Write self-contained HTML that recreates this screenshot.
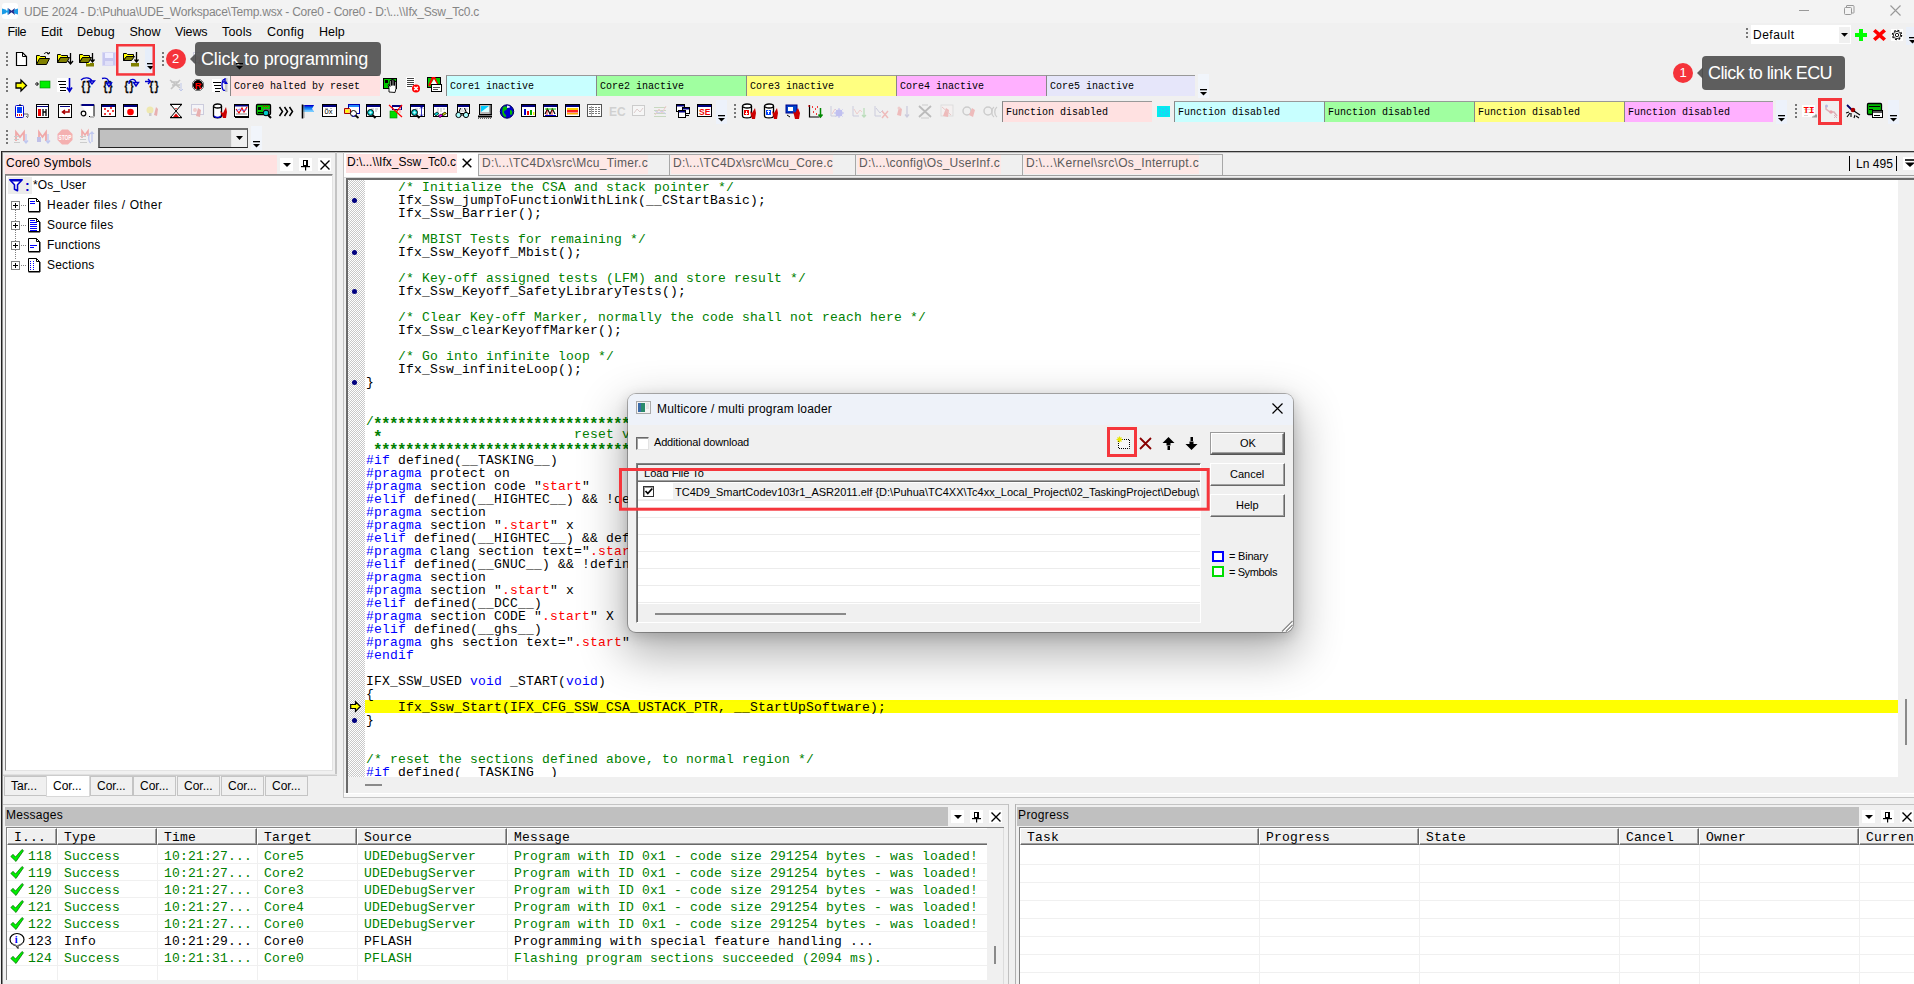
<!DOCTYPE html>
<html lang="en"><head><meta charset="utf-8"><title>UDE 2024</title><style>
html,body{margin:0;padding:0}
body{width:1914px;height:984px;overflow:hidden;background:#f0f0f0;position:relative;font-family:"Liberation Sans",sans-serif;font-size:12px;color:#000}
div,svg{position:absolute}
svg{overflow:visible}
.ui{font-family:"Liberation Sans",sans-serif;font-size:12px;line-height:16px;white-space:pre}
.mono{font-family:"Liberation Mono",monospace;font-size:13px;letter-spacing:.2px;line-height:13px;white-space:pre}
.sm{font-family:"Liberation Mono",monospace;font-size:11px;line-height:14px;white-space:pre;transform-origin:0 0;transform:scaleX(.909)}
.st{position:relative;top:4px;left:-1px;font-size:16px;letter-spacing:-1.6px;line-height:0;font-weight:bold}
.c{color:#008000}.k{color:#00f}.s{color:#f00}
</style></head><body>
<div style="left:0px;top:0px;width:1914px;height:23px;background:#f3f3f3;"></div>
<div style="left:2px;top:3px;width:16px;height:16px;background:#fff;border-radius:3px;"></div>
<svg style="left:2px;top:7px" width="16" height="9" viewBox="0 0 16 9"><path d="M0 1.500l4 1.200v3.600l-4 1.200z" fill="#1a9be6"/><path d="M16 1.500l-4 1.200v3.600l4 1.200z" fill="#1a9be6"/><path d="M3.500 3.500h2v-2.500l3 3.500-3 3.500v-2.500h-2z" fill="#1a9be6"/><path d="M6 1l4.500 3.500-4.500 3.500 1.500-3.500z" fill="#232d8c"/><path d="M13 1l-4.500 3.500 4.500 3.500-1.200-3.500z" fill="#232d8c"/></svg>
<div class="ui" style="left:24px;top:4px;letter-spacing:-0.231px;color:#858585;">UDE 2024 - D:\Puhua\UDE_Workspace\Temp.wsx - Core0 - Core0 - D:\...\\Ifx_Ssw_Tc0.c</div>
<svg style="left:1799px;top:10px" width="11" height="1" viewBox="0 0 11 1"><path d="M0 .5h10" stroke="#999"/></svg>
<svg style="left:1844px;top:5px" width="11" height="11" viewBox="0 0 11 11"><rect x=".5" y="2.500" width="7" height="7" rx="1" fill="none" stroke="#999"/><path d="M2.500 2.500v-1.500a.5 .5 0 0 1 .5-.5h6a1 1 0 0 1 1 1v6a.5 .5 0 0 1-.5.5h-1.500" fill="none" stroke="#999"/></svg>
<svg style="left:1890px;top:5px" width="11" height="11" viewBox="0 0 11 11"><path d="M.5 .5l10 10m0-10l-10 10" stroke="#999" stroke-width="1.100"/></svg>
<div class="ui" style="left:7.5px;top:24px;letter-spacing:-0.361px;font-size:12.5px;">File</div>
<div class="ui" style="left:41px;top:24px;letter-spacing:-0.060px;font-size:12.5px;">Edit</div>
<div class="ui" style="left:77px;top:24px;letter-spacing:0.213px;font-size:12.5px;">Debug</div>
<div class="ui" style="left:129.5px;top:24px;letter-spacing:-0.092px;font-size:12.5px;">Show</div>
<div class="ui" style="left:175px;top:24px;letter-spacing:-0.144px;font-size:12.5px;">Views</div>
<div class="ui" style="left:222px;top:24px;letter-spacing:0.164px;font-size:12.5px;">Tools</div>
<div class="ui" style="left:267px;top:24px;letter-spacing:0.178px;font-size:12.5px;">Config</div>
<div class="ui" style="left:319px;top:24px;letter-spacing:-0.002px;font-size:12.5px;">Help</div>
<div style="left:1746px;top:28px;width:2px;height:11px;background:repeating-linear-gradient(#777 0 2px,transparent 2px 4px);"></div>
<div style="left:1751px;top:25px;width:100px;height:19px;background:#fff;"></div>
<div style="left:1839px;top:27px;width:11px;height:16px;background:#f0f0f0;"></div>
<div class="ui" style="left:1753px;top:27px;letter-spacing:0.497px;">Default</div>
<svg style="left:1841px;top:33px" width="7" height="4" viewBox="0 0 7 4"><path d="M0 0h7l-3.500 3.800z" fill="#000"/></svg>
<svg style="left:1855px;top:29px" width="12" height="12" viewBox="0 0 12 12"><path d="M4 0h4v4h4v4h-4v4h-4v-4h-4v-4h4z" fill="#0f0"/></svg>
<svg style="left:1873px;top:29px" width="13" height="12" viewBox="0 0 13 12"><path d="M0 2.500l2.500-2.500 4 3.500 4-3.500 2.500 2.500-4 3.500 4 3.500-2.500 2.500-4-3.500-4 3.500-2.500-2.500 4-3.500z" fill="#f00"/></svg>
<div style="left:1891px;top:29px;width:12px;height:12px;background:#fff;"></div>
<svg style="left:1891px;top:29px" width="12" height="12" viewBox="0 0 12 12"><circle cx="6" cy="6" r="4.600" fill="none" stroke="#000" stroke-width="1.300" stroke-dasharray="1.800 1.810"/><circle cx="6" cy="6" r="3.700" fill="#fff" stroke="#000" stroke-width=".8"/><circle cx="6" cy="6" r="1.700" fill="none" stroke="#000" stroke-width=".9"/></svg>
<div style="left:1906px;top:27px;width:8px;height:18px;background:#eaf0fa;"></div>
<svg style="left:1909px;top:37px" width="7" height="7" viewBox="0 0 7 7"><rect x="0" y="0" width="7" height="1.300" fill="#000"/><path d="M0 3h7l-3.500 3.500z" fill="#000"/></svg>
<div style="left:6px;top:52px;width:2px;height:14px;background:repeating-linear-gradient(#777 0 2px,transparent 2px 4px);"></div>
<svg style="left:13px;top:51px" width="16" height="16" viewBox="0 0 16 16"><path d="M3.5 1.500h6l4 4v9h-10z" fill="#fff" stroke="#000" stroke-width="1.200"/><path d="M9.500 1.500v4h4" fill="none" stroke="#000"/></svg>
<svg style="left:35px;top:51px" width="16" height="16" viewBox="0 0 16 16"><path d="M1.5 13.5v-9h3l1 1h5v2" fill="#ff0" stroke="#000"/><path d="M1.5 13.5l3-6h10l-3 6z" fill="#808000" stroke="#000"/><path d="M9 3c1.5-2 4-2 5 0m0 0l.5-2m-.5 2l-2-.5" fill="none" stroke="#000"/></svg>
<svg style="left:57px;top:51px" width="16" height="16" viewBox="0 0 16 16"><path d="M.5 3.5h3l1 1h6v2h-7l-3 5z" fill="#ff0" stroke="#000"/><path d="M.5 11.5l3-5h9l-3 5z" fill="#808000" stroke="#000"/><path d="M13.5 2v11m-2.5-3l2.5 3 2.5-3" fill="none" stroke="#000" stroke-width="1.3"/></svg>
<svg style="left:79px;top:51px" width="16" height="16" viewBox="0 0 16 16"><path d="M.5 3.5h3l1 1h6v2h-7l-3 5z" fill="#ff0" stroke="#000"/><path d="M.5 11.5l3-5h9l-3 5z" fill="#808000" stroke="#000"/><path d="M13.5 2v9m-2-2.5l2 2.5 2-2.5" fill="none" stroke="#000" stroke-width="1.3"/><rect x="7" y="12" width="8" height="3.5" fill="#808000"/><rect x="8" y="12" width="3" height="1" fill="#ff0"/></svg>
<svg style="left:101px;top:51px" width="16" height="16" viewBox="0 0 16 16"><path d="M1.5 1.5h13v13h-13z" fill="#c8c8f0" stroke="#d8d8f4"/><rect x="4" y="2" width="8" height="5" fill="#eef"/><rect x="4" y="10" width="8" height="4" fill="#e0e0f8"/></svg>
<svg style="left:123px;top:51px" width="16" height="16" viewBox="0 0 16 16"><path d="M.5 2.5h3l1 1h6v2h-7l-3 4z" fill="#ff0" stroke="#000"/><path d="M.5 9.5l3-4h8l-3 4z" fill="#808000" stroke="#000"/><path d="M13.5 1v10m-2-2.5l2 2.5 2-2.5" fill="none" stroke="#000" stroke-width="1.3"/><rect x="8" y="12" width="8" height="3.5" fill="#808000"/></svg>
<div style="left:145px;top:48px;width:11px;height:24px;background:#e6eefa;"></div>
<svg style="left:147px;top:63px" width="7" height="7" viewBox="0 0 7 7"><rect x="0" y="0" width="7" height="1.300" fill="#000"/><path d="M0 3h7l-3.500 3.500z" fill="#000"/></svg>
<div style="left:162px;top:52px;width:2px;height:14px;background:repeating-linear-gradient(#777 0 2px,transparent 2px 4px);"></div>
<svg style="left:170px;top:51px" width="16" height="16" viewBox="0 0 16 16"><rect x="1.500" y="2.500" width="12" height="10" fill="#f6f6f6" stroke="#ccc"/><path d="M3 10l3-4 3 3 3-4" stroke="#dcc" fill="none"/></svg>
<svg style="left:192px;top:51px" width="16" height="16" viewBox="0 0 16 16"><rect x="1.500" y="1.500" width="12" height="10" fill="#f4f4f8" stroke="#ccd"/><path d="M6 13l2-8 3 2-1 7z" fill="#e8b0b0"/><circle cx="5" cy="7" r="2" fill="#ecc"/></svg>
<svg style="left:214px;top:51px" width="16" height="16" viewBox="0 0 16 16"><rect x="1.500" y="2.500" width="12" height="10" fill="#f6f6f6" stroke="#ccc"/><path d="M3 10l3-4 3 3 3-4" stroke="#dcc" fill="none"/></svg>
<div style="left:6px;top:78px;width:2px;height:14px;background:repeating-linear-gradient(#777 0 2px,transparent 2px 4px);"></div>
<svg style="left:13px;top:77px" width="16" height="16" viewBox="0 0 16 16"><path d="M3 6h5v-3l5.500 5.500-5.500 5.500v-3h-5z" fill="#ff0" stroke="#000" stroke-width="1.300"/></svg>
<svg style="left:35px;top:77px" width="16" height="16" viewBox="0 0 16 16"><rect x="5" y="4" width="10" height="7" fill="#0e0" stroke="#008000" stroke-width=".6"/><path d="M0 7h3m-1.5-2l2 2-2 2" fill="none" stroke="#000"/></svg>
<svg style="left:57px;top:77px" width="16" height="16" viewBox="0 0 16 16"><rect x="0" y="1" width="12" height="14" fill="#fff"/><path d="M1 4.5h8M2 7.5h7M3 10.5h6M3 13.5h6" stroke="#000"/><path d="M12.5 1v13m-2.5-3.5l2.5 4 2.5-4" fill="none" stroke="#00c" stroke-width="1.6"/></svg>
<svg style="left:79px;top:77px" width="16" height="16" viewBox="0 0 16 16"><text x="2" y="13" font-family="Liberation Mono,monospace" font-weight="bold" font-size="12.500" textLength="10" lengthAdjust="spacingAndGlyphs" fill="#000" stroke="#000" stroke-width=".45">{}</text><path d="M2 3c3-3 9-3 11 1m0 3l-2.500-3h5z" fill="none" stroke="#00c" stroke-width="1.4"/></svg>
<svg style="left:101px;top:77px" width="16" height="16" viewBox="0 0 16 16"><text x="2" y="13" font-family="Liberation Mono,monospace" font-weight="bold" font-size="12.500" textLength="10" lengthAdjust="spacingAndGlyphs" fill="#000" stroke="#000" stroke-width=".45">{}</text><path d="M1 1.500c4-1 7 0 7 5m0 3l-2.500-3.500h5z" fill="none" stroke="#00c" stroke-width="1.400"/></svg>
<svg style="left:123px;top:77px" width="16" height="16" viewBox="0 0 16 16"><text x="1" y="13" font-family="Liberation Mono,monospace" font-weight="bold" font-size="12.500" textLength="10" lengthAdjust="spacingAndGlyphs" fill="#000" stroke="#000" stroke-width=".45">{}</text><path d="M6 7c0-6 7-6 7-1m0 3l-2.500-3.500h5z" fill="none" stroke="#00c" stroke-width="1.400"/></svg>
<svg style="left:145px;top:77px" width="16" height="16" viewBox="0 0 16 16"><text x="4" y="13" font-family="Liberation Mono,monospace" font-weight="bold" font-size="12.500" textLength="10" lengthAdjust="spacingAndGlyphs" fill="#000" stroke="#000" stroke-width=".45">{}</text><path d="M0 4.500h5m-2-2.500l2.500 2.500-2.500 2.500" fill="none" stroke="#00c" stroke-width="1.400"/></svg>
<svg style="left:168px;top:77px" width="16" height="16" viewBox="0 0 16 16"><path d="M2 3l10 8M12 3l-9 9M3 5h8M4 8h8" stroke="#c4c4c4" stroke-width="1.600"/><path d="M13 6v8m-2-2l2 2 2-2" stroke="#c0c8e8" fill="none"/></svg>
<svg style="left:190px;top:77px" width="16" height="16" viewBox="0 0 16 16"><path d="M5.500 2.500h5l3 3v5l-3 3h-5l-3-3v-5z" fill="#fff" stroke="#777"/><circle cx="8" cy="8" r="5" fill="#000"/><text x="4.700" y="11.500" font-family="Liberation Sans,sans-serif" font-weight="bold" font-size="9.500" fill="#f00">R</text></svg>
<svg style="left:212px;top:77px" width="16" height="16" viewBox="0 0 16 16"><rect x="0" y="2" width="9" height="13" fill="#fff"/><path d="M1 5.500h8M2 8.500h7M3 11.500h6M3 14.500h5" stroke="#000"/><rect x="13" y="1" width="2.500" height="14" fill="#c8c8c8"/><path d="M13 3c-4-3-4 13 0 10m0-12v4h-3" fill="none" stroke="#00c" stroke-width="1.300"/><path d="M14 4l2 3h-4z" fill="#00c"/></svg>
<div style="left:230px;top:75px;width:150px;height:21px;background:#ffe1e1;border-left:1px solid #888;border-top:1px solid #999;box-sizing:border-box;"></div>
<div class="sm" style="left:234px;top:79px">Core0 halted by reset</div>
<svg style="left:383px;top:77px" width="16" height="16" viewBox="0 0 16 16"><rect x=".5" y="1.500" width="13" height="10" fill="#0c0" stroke="#000"/><rect x="2" y="3" width="3" height="3" fill="#000"/><path d="M6 15v-4l-1-3 1-.5 1 2v-6h1.500v5-6h1.500v6-5.500h1.500v5.500-4h1.500v7l-1 4z" fill="#fff" stroke="#000" stroke-width=".9"/></svg>
<svg style="left:405px;top:77px" width="16" height="16" viewBox="0 0 16 16"><rect x="1" y="0" width="9" height="12" fill="#fff"/><path d="M2 1.500h7M2 3.500h7M2 5.500h7M2 7.500h7M2 9.500h5" stroke="#444"/><circle cx="11" cy="11.500" r="4" fill="#f00"/><path d="M9.200 9.700l3.600 3.600m0-3.600l-3.600 3.600" stroke="#fff" stroke-width="1.500"/></svg>
<svg style="left:427px;top:77px" width="16" height="16" viewBox="0 0 16 16"><rect x=".5" y=".5" width="13" height="10" fill="#0c0" stroke="#000"/><path d="M2 9l3.500-8h2l3.500 8" fill="none" stroke="#f00" stroke-width="2"/><path d="M4 7l3-5 3 5z" fill="#fff"/><rect x="4.500" y="7.500" width="10" height="7" fill="#fff" stroke="#000"/><path d="M6 10.500h7M6 12.500h5" stroke="#555"/></svg>
<div style="left:446px;top:75px;width:150px;height:21px;background:#c8ffff;border-left:1px solid #888;border-top:1px solid #999;box-sizing:border-box;"></div>
<div class="sm" style="left:450px;top:79px">Core1 inactive</div>
<div style="left:596px;top:75px;width:150px;height:21px;background:#a0ffa0;border-left:1px solid #888;border-top:1px solid #999;box-sizing:border-box;"></div>
<div class="sm" style="left:600px;top:79px">Core2 inactive</div>
<div style="left:746px;top:75px;width:150px;height:21px;background:#ffff80;border-left:1px solid #888;border-top:1px solid #999;box-sizing:border-box;"></div>
<div class="sm" style="left:750px;top:79px">Core3 inactive</div>
<div style="left:896px;top:75px;width:150px;height:21px;background:#ffb0ff;border-left:1px solid #888;border-top:1px solid #999;box-sizing:border-box;"></div>
<div class="sm" style="left:900px;top:79px">Core4 inactive</div>
<div style="left:1046px;top:75px;width:149px;height:21px;background:#e6e6fa;border-left:1px solid #888;border-top:1px solid #999;box-sizing:border-box;"></div>
<div class="sm" style="left:1050px;top:79px">Core5 inactive</div>
<div style="left:1198px;top:74px;width:11px;height:24px;background:#f1f5fb;"></div>
<svg style="left:1200px;top:89px" width="7" height="7" viewBox="0 0 7 7"><rect x="0" y="0" width="7" height="1.300" fill="#000"/><path d="M0 3h7l-3.500 3.500z" fill="#000"/></svg>
<div style="left:6px;top:104px;width:2px;height:14px;background:repeating-linear-gradient(#777 0 2px,transparent 2px 4px);"></div>
<svg style="left:13px;top:103px" width="16" height="16" viewBox="0 0 16 16"><rect x="2.500" y="2.500" width="8" height="12" rx="1" fill="#fff" stroke="#00c"/><rect x="4" y="4" width="5" height="6" fill="#04f"/><path d="M4 12h1m1 0h1m1 0h1" stroke="#e00" stroke-width="2"/><path d="M7 1v2" stroke="#000"/><path d="M11 11h4v3m-2-1l2 2" stroke="#666" fill="none"/></svg>
<svg style="left:35px;top:103px" width="16" height="16" viewBox="0 0 16 16"><rect x="1.500" y="1.500" width="12" height="13" fill="#fff" stroke="#000"/><path d="M2 3.500h11" stroke="#000080"/><rect x="3" y="6" width="3" height="7" fill="#e00"/><path d="M8 6v7M11 6v7M8 9h3" stroke="#000" stroke-width="1.300"/></svg>
<svg style="left:57px;top:103px" width="16" height="16" viewBox="0 0 16 16"><rect x="1.500" y="1.500" width="13" height="13" fill="#fff" stroke="#000"/><path d="M3 3.500h10" stroke="#000080"/><path d="M12 6v3h-6m2-2l-2.500 2 2.500 2" fill="none" stroke="#a00" stroke-width="1.500"/></svg>
<svg style="left:79px;top:103px" width="16" height="16" viewBox="0 0 16 16"><path d="M2 1.500h13v12h-5" fill="#fff" stroke="#000"/><rect x="2" y="1" width="13" height="2" fill="#000080"/><circle cx="4.500" cy="10.500" r="2.300" fill="#fff" stroke="#000" stroke-width="1.200"/><path d="M1 2h2" stroke="#aaa"/><rect x="11" y="13" width="4" height="2" fill="#bbb"/></svg>
<svg style="left:101px;top:103px" width="16" height="16" viewBox="0 0 16 16"><rect x=".5" y="1.5" width="14" height="12" fill="#fff" stroke="#000"/><rect x="1" y="2" width="13" height="2" fill="#000080"/><path d="M3 6h2M9 5h2M6 8h2M11 8h2M3 11h2M8 11h2" stroke="#e00" stroke-width="1.500"/></svg>
<svg style="left:123px;top:103px" width="16" height="16" viewBox="0 0 16 16"><rect x=".5" y="1.5" width="14" height="12" fill="#fff" stroke="#000"/><rect x="1" y="2" width="13" height="2" fill="#000080"/><circle cx="7.500" cy="9" r="3.300" fill="#f00"/></svg>
<svg style="left:145px;top:103px" width="16" height="16" viewBox="0 0 16 16"><circle cx="5" cy="7" r="3.500" fill="#eee8b0"/><rect x="4" y="10" width="2.500" height="3" fill="#ccc"/><path d="M9 12l2-8 2 2-1 7z" fill="#e8b0b0"/></svg>
<svg style="left:168px;top:103px" width="16" height="16" viewBox="0 0 16 16"><path d="M2 1.500h12M2 14.500h12" stroke="#000" stroke-width="1.300"/><path d="M3 2l5 6 5-6M3 14l5-6 5 6" fill="#fff" stroke="#000"/><path d="M5 14l3-3.500 3 3.500z" fill="#d00"/><path d="M7 5h2l-1 1.500z" fill="#d00"/></svg>
<svg style="left:190px;top:103px" width="16" height="16" viewBox="0 0 16 16"><rect x="1.500" y="1.500" width="12" height="10" fill="#f4f4f8" stroke="#ccd"/><path d="M6 13l2-8 3 2-1 7z" fill="#e8b0b0"/><circle cx="5" cy="7" r="2" fill="#ecc"/></svg>
<svg style="left:212px;top:103px" width="16" height="16" viewBox="0 0 16 16"><path d="M1.500 3v10c0 2.500 8 2.500 8 0v-10" fill="#fff" stroke="#000" stroke-width="1.300"/><ellipse cx="5.500" cy="3" rx="4" ry="2" fill="#fff" stroke="#000" stroke-width="1.300"/><path d="M2 13c2 2 5 2 7 0" stroke="#00c" fill="none" stroke-width="1.500"/><path d="M8 8l3 2 3-6 1 5-1 6-3 0z" fill="#c00"/></svg>
<svg style="left:234px;top:103px" width="16" height="16" viewBox="0 0 16 16"><rect x=".5" y="1.500" width="14" height="12" fill="#fff" stroke="#000"/><rect x="1" y="2" width="13" height="1.500" fill="#000080"/><path d="M2 11h11" stroke="#888"/><path d="M2 6l3 4 3-5 2 4 3-5" fill="none" stroke="#e00" stroke-width="1.200"/><path d="M2 8l4-2 3 2 4-2" fill="none" stroke="#66f" stroke-width=".8"/><path d="M1 14.500h14" stroke="#000"/></svg>
<svg style="left:256px;top:103px" width="16" height="16" viewBox="0 0 16 16"><rect x=".5" y="1.500" width="14" height="10" rx="1" fill="#0c0" stroke="#000" stroke-width="1.300"/><rect x="2" y="4" width="3" height="3" fill="#000"/><path d="M7 3.500h6" stroke="#e00" stroke-dasharray="1 1"/><path d="M2 9.500h5" stroke="#000"/><rect x="7" y="6" width="7" height="5" fill="#666"/><circle cx="10" cy="10" r="2.800" fill="#0cc" stroke="#000"/><path d="M12 12l3 3" stroke="#000" stroke-width="2"/></svg>
<svg style="left:278px;top:103px" width="16" height="16" viewBox="0 0 16 16"><path d="M1.500 4l3 4.500-3 4.500M6.500 4l3 4.500-3 4.500M11.500 4l3 4.500-3 4.500" fill="none" stroke="#000" stroke-width="1.500"/></svg>
<svg style="left:300px;top:103px" width="16" height="16" viewBox="0 0 16 16"><path d="M3 2h11l-2 3.500 2 3.500h-11z" fill="#39f"/><path d="M3 2h11l-1 1.800h-10z" fill="#00c"/><path d="M3 3.800h10l-1 1.700h-9z" fill="#06e"/><path d="M3 7.200h10l1 1.800h-11z" fill="#7cf"/><path d="M2.500 1.500v14" stroke="#000" stroke-width="1.600"/><path d="M4 2v13" stroke="#888" stroke-width=".8"/></svg>
<svg style="left:322px;top:103px" width="16" height="16" viewBox="0 0 16 16"><rect x=".5" y="1.5" width="14" height="12" fill="#fff" stroke="#000"/><rect x="1" y="2" width="13" height="2" fill="#000080"/><text x="2.500" y="11" font-family="Liberation Sans,sans-serif" font-size="7.500" fill="#000">0x</text><path d="M3 5.500h3M8 5.500h2" stroke="#888" stroke-width=".6"/></svg>
<svg style="left:344px;top:103px" width="16" height="16" viewBox="0 0 16 16"><rect x="4.500" y="1.500" width="11" height="9" fill="#fff" stroke="#00a"/><rect x="5" y="2" width="10" height="2" fill="#28f"/><path d="M.5 5.500h5l1 1v4h-6z" fill="#fc6" stroke="#a00"/><rect x="1.500" y="7" width="3" height="2.500" fill="#ff0"/><circle cx="9.500" cy="10.500" r="3" fill="#fff" stroke="#000"/><path d="M11.500 12.500l3 2.500" stroke="#000" stroke-width="1.800"/><path d="M8 12.500c1 1 2 1 3 0" stroke="#00c" fill="none"/></svg>
<svg style="left:366px;top:103px" width="16" height="16" viewBox="0 0 16 16"><rect x=".5" y="1.5" width="14" height="12" fill="#fff" stroke="#000"/><rect x="1" y="2" width="13" height="2" fill="#000080"/><path d="M5 6h3M9 6h3M9 8h2" stroke="#999" stroke-width=".7"/><circle cx="4.5" cy="9.5" r="3" fill="#0cc" stroke="#000"/><circle cx="4.5" cy="9.5" r="1.2" fill="#cff"/><path d="M6.5 12l3 3" stroke="#000" stroke-width="2"/></svg>
<svg style="left:388px;top:103px" width="16" height="16" viewBox="0 0 16 16"><rect x="4.500" y="2.500" width="9" height="4" fill="#fff" stroke="#000080"/><rect x="5" y="2" width="9" height="2" fill="#000080"/><rect x="2" y="8" width="7" height="7" fill="#0d0" stroke="#080" stroke-width=".6"/><path d="M1 2l13 12M14 2l-5 6" stroke="#f00" stroke-width="1.200"/><path d="M12 5v5" stroke="#f99"/></svg>
<svg style="left:410px;top:103px" width="16" height="16" viewBox="0 0 16 16"><rect x=".5" y="1.5" width="14" height="12" fill="#fff" stroke="#000"/><rect x="1" y="2" width="13" height="2" fill="#000080"/><path d="M5 6h3M5 8h2" stroke="#999" stroke-width=".7"/><path d="M11.500 4v9m-1.500-7.500l1.500-1.500 1.500 1.500m-3 6l1.500 1.500 1.500-1.500" stroke="#00a" fill="none" stroke-width=".8"/><circle cx="4.5" cy="9.5" r="3" fill="#0cc" stroke="#000"/><circle cx="4.5" cy="9.5" r="1.2" fill="#cff"/><path d="M6.5 12l3 3" stroke="#000" stroke-width="2"/></svg>
<svg style="left:433px;top:103px" width="16" height="16" viewBox="0 0 16 16"><rect x=".5" y="1.5" width="14" height="12" fill="#fff" stroke="#000"/><rect x="1" y="2" width="13" height="2" fill="#000080"/><path d="M4 6h2M7 6h2M10 6h2M4 8h2M7 8h2" stroke="#999" stroke-width=".7"/><path d="M1 11l3-2 2 1.500-3 2.500z" fill="#0cc" stroke="#000" stroke-width=".7"/><path d="M5 13l2 1.500 3-2-2-1.500z" fill="#e0e" stroke="#000" stroke-width=".7"/><path d="M9 11l3-2 1.500 1.500-3 2z" fill="#cc0" stroke="#000" stroke-width=".7"/></svg>
<svg style="left:455px;top:103px" width="16" height="16" viewBox="0 0 16 16"><rect x="2.500" y="1.500" width="12" height="9" fill="#fff" stroke="#000"/><rect x="3" y="2" width="11" height="2" fill="#000080"/><path d="M5 6h3M9 6h4M5 8h7" stroke="#999" stroke-width=".7"/><path d="M3.500 10l2-5M11.500 10l-2-5" stroke="#000" fill="none"/><circle cx="3.500" cy="12" r="2.600" fill="#aff" stroke="#000"/><circle cx="11" cy="12" r="2.600" fill="#aff" stroke="#000"/><path d="M6 12h2.500" stroke="#000"/></svg>
<svg style="left:477px;top:103px" width="16" height="16" viewBox="0 0 16 16"><rect x="2.500" y="1.500" width="12" height="10" fill="#bbb" stroke="#000"/><rect x="4" y="3" width="8" height="6" fill="#0cf"/><path d="M4 9l8-6v6z" fill="#dff"/><path d="M13.500 2v9" stroke="#666" stroke-width="1.500"/><path d="M1 13.500h14" stroke="#000" stroke-width="2"/><path d="M1 15.500h13" stroke="#666" stroke-dasharray="1 1"/></svg>
<svg style="left:499px;top:103px" width="16" height="16" viewBox="0 0 16 16"><circle cx="8" cy="8.500" r="6.700" fill="#00c" stroke="#005"/><path d="M4 4c3-2 5 0 4 2s-3 1-3 3 3 3 2 5c-3 0-5-4-3-10z" fill="#0b0"/><path d="M11 7c2 0 3 2 2 4s-2 1-2-1z" fill="#0b0"/><path d="M8 2.500c2 0 3 1 3 2l-3 .5z" fill="#eef"/></svg>
<svg style="left:521px;top:103px" width="16" height="16" viewBox="0 0 16 16"><rect x=".5" y="1.5" width="14" height="12" fill="#fff" stroke="#000"/><rect x="1" y="2" width="13" height="2" fill="#000080"/><rect x="3" y="6" width="2" height="6" fill="#00c"/><rect x="6" y="8" width="2" height="4" fill="#e00"/><rect x="9" y="7" width="2" height="5" fill="#0a0"/><rect x="12" y="9" width="1.500" height="3" fill="#ee0"/></svg>
<svg style="left:543px;top:103px" width="16" height="16" viewBox="0 0 16 16"><rect x=".5" y="1.5" width="14" height="12" fill="#fff" stroke="#000"/><rect x="1" y="2" width="13" height="2" fill="#000080"/><path d="M2 11l2.500-5 2.500 5 2.500-5 2.500 5" fill="none" stroke="#000" stroke-width="1.200"/><path d="M4 5v8M9 5v8" stroke="#e00" stroke-width=".8"/><rect x="2" y="5" width="11" height="2" fill="#0c0" opacity=".5"/><path d="M2 12.500h11" stroke="#00c"/></svg>
<svg style="left:565px;top:103px" width="16" height="16" viewBox="0 0 16 16"><rect x=".5" y="1.5" width="14" height="12" fill="#fff" stroke="#000"/><rect x="1" y="2" width="13" height="2" fill="#000080"/><rect x="2" y="5" width="11" height="2" fill="#ffd000"/><rect x="2" y="7" width="11" height="2.500" fill="#f22"/><rect x="2" y="10" width="11" height="1.500" fill="#fa0"/></svg>
<svg style="left:587px;top:103px" width="16" height="16" viewBox="0 0 16 16"><rect x=".5" y="1.500" width="14" height="12" fill="#fff" stroke="#555"/><path d="M2 4.500h11M2 6.500h11M2 8.500h11M2 10.500h11" stroke="#777" stroke-dasharray="2 1"/><path d="M4.500 3v10" stroke="#aaa"/></svg>
<svg style="left:609px;top:103px" width="16" height="16" viewBox="0 0 16 16"><text x="0" y="13" font-family="Liberation Sans,sans-serif" font-weight="bold" font-size="12" fill="#d0d0d0">EC</text></svg>
<svg style="left:631px;top:103px" width="16" height="16" viewBox="0 0 16 16"><rect x="1.500" y="2.500" width="12" height="10" fill="#f6f6f6" stroke="#ccc"/><path d="M3 10l3-4 3 3 3-4" stroke="#dcc" fill="none"/></svg>
<svg style="left:653px;top:103px" width="16" height="16" viewBox="0 0 16 16"><path d="M1 4.500h12M1 7.500h12M1 10.500h12M1 13.500h12" stroke="#c8d8c0"/><path d="M2 12l4-6 3 4 4-7" stroke="#ecc" fill="none"/><path d="M2 8l4 2 3-2 4 3" stroke="#cce" fill="none"/></svg>
<svg style="left:675px;top:103px" width="16" height="16" viewBox="0 0 16 16"><rect x="1.500" y="1.500" width="8" height="7" fill="#fff" stroke="#000"/><rect x="2" y="2" width="7" height="1.500" fill="#000080"/><rect x="7.500" y="4.500" width="7" height="6" fill="#fff" stroke="#000"/><rect x="8" y="5" width="6" height="1.500" fill="#000080"/><rect x="3.500" y="7.500" width="7" height="7" fill="#fff" stroke="#000"/><rect x="4" y="8" width="6" height="1.500" fill="#000080"/><path d="M11 12.500h3" stroke="#000"/></svg>
<svg style="left:697px;top:103px" width="16" height="16" viewBox="0 0 16 16"><rect x=".5" y="1.5" width="14" height="12" fill="#fff" stroke="#000"/><rect x="1" y="2" width="13" height="2" fill="#000080"/><text x="2" y="12" font-family="Liberation Sans,sans-serif" font-weight="bold" font-size="8.500" fill="#e00">SE</text></svg>
<div style="left:716px;top:100px;width:11px;height:24px;background:#edf2fb;"></div>
<svg style="left:718px;top:115px" width="7" height="7" viewBox="0 0 7 7"><rect x="0" y="0" width="7" height="1.300" fill="#000"/><path d="M0 3h7l-3.500 3.500z" fill="#000"/></svg>
<div style="left:734px;top:104px;width:2px;height:14px;background:repeating-linear-gradient(#777 0 2px,transparent 2px 4px);"></div>
<svg style="left:741px;top:103px" width="16" height="16" viewBox="0 0 16 16"><path d="M1.500 3v10c0 2.500 9 2.500 9 0v-10" fill="#fff" stroke="#000" stroke-width="1.300"/><ellipse cx="6" cy="3" rx="4.500" ry="2" fill="#fff" stroke="#000" stroke-width="1.300"/><rect x="3" y="7" width="5" height="5" fill="#e00"/><path d="M5.500 8v3m-1.500-1l1.500 1.500 1.500-1.500" stroke="#fff" fill="none"/><path d="M9 8l2 2 3-5 1 5-1 6h-3z" fill="#c00"/></svg>
<svg style="left:763px;top:103px" width="16" height="16" viewBox="0 0 16 16"><path d="M1.500 3v10c0 2.500 9 2.500 9 0v-10" fill="#fff" stroke="#000" stroke-width="1.300"/><ellipse cx="6" cy="3" rx="4.500" ry="2" fill="#fff" stroke="#000" stroke-width="1.300"/><rect x="3" y="7" width="5" height="5" fill="#04f"/><path d="M5.500 11v-3m-1.500 1l1.500-1.500 1.500 1.500" stroke="#fff" fill="none"/><path d="M9 8l2 2 3-5 1 5-1 6h-3z" fill="#c00"/></svg>
<svg style="left:785px;top:103px" width="16" height="16" viewBox="0 0 16 16"><rect x="1" y="2" width="11" height="8" fill="#04c" stroke="#008"/><rect x="3" y="4" width="5" height="4" fill="#fff"/><path d="M8 8l2 2 3-5 2 5-1 6h-4z" fill="#c00"/><path d="M2 12l3 2" stroke="#000"/></svg>
<svg style="left:807px;top:103px" width="16" height="16" viewBox="0 0 16 16"><path d="M2.500 2v12h10" fill="none" stroke="#000" stroke-width="1.200"/><path d="M5 4h1M8 6h1M6 9h1M10 4h1M9 11h1" stroke="#e00" stroke-width="1.500"/><path d="M13.500 5v9m-2-2.500l2 2.500 2-2.500" stroke="#080" fill="none" stroke-width="1.500"/><path d="M1 3h2" stroke="#e00"/></svg>
<svg style="left:829px;top:103px" width="16" height="16" viewBox="0 0 16 16"><path d="M2 3v10h6" stroke="#ccd" fill="none"/><path d="M3 11l3-5 3 3" stroke="#ecc" fill="none"/><circle cx="10" cy="10" r="3.500" fill="#c0c0f0"/><path d="M10 5v10M5 10h10M6.500 6.500l7 7M13.500 6.500l-7 7" stroke="#c0c0f0"/></svg>
<svg style="left:851px;top:103px" width="16" height="16" viewBox="0 0 16 16"><path d="M2 3v10h6" stroke="#ccd" fill="none"/><path d="M3 6l3 5 3-4 2 2" stroke="#ecc" fill="none"/><path d="M13 5v9m-2-2l2 2 2-2" stroke="#bdb" fill="none" stroke-width="1.300"/></svg>
<svg style="left:873px;top:103px" width="16" height="16" viewBox="0 0 16 16"><path d="M2 3v10h6" stroke="#ccd" fill="none"/><path d="M3 5l4 5 3-3" stroke="#ccd" fill="none"/><path d="M9 8l6 7M15 8l-6 7" stroke="#ebb" stroke-width="1.500"/></svg>
<svg style="left:895px;top:103px" width="16" height="16" viewBox="0 0 16 16"><path d="M2 12l2-8 3 2-1 7z" fill="#ebb"/><circle cx="4" cy="5" r="1.500" fill="#ecc"/><path d="M12 3v11m-2-2.500l2 2.500 2-2.500" stroke="#ccd" fill="none" stroke-width="1.300"/></svg>
<svg style="left:917px;top:103px" width="16" height="16" viewBox="0 0 16 16"><path d="M2 3l12 11M14 3l-12 11" stroke="#bbb" stroke-width="1.800"/><path d="M5 2h6M4 15h8" stroke="#ccc"/></svg>
<svg style="left:939px;top:103px" width="16" height="16" viewBox="0 0 16 16"><rect x="2" y="2" width="12" height="11" fill="#f4f0f0" stroke="#ddd"/><path d="M4 13l3-8 3 2-1 7z" fill="#ebb"/><path d="M3 4l9 8" stroke="#e8c8c8"/></svg>
<svg style="left:961px;top:103px" width="16" height="16" viewBox="0 0 16 16"><circle cx="6" cy="8" r="4" fill="none" stroke="#ccc" stroke-width="1.500"/><path d="M8 12l3-7 3 2-2 7z" fill="#ebb"/></svg>
<svg style="left:983px;top:103px" width="16" height="16" viewBox="0 0 16 16"><circle cx="5" cy="8" r="4" fill="none" stroke="#ccc" stroke-width="1.500"/><path d="M11 4c-3 2-3 8 0 10M14 4c-3 2-3 8 0 10" fill="none" stroke="#ccc" stroke-width="1.300"/></svg>
<div style="left:1002px;top:101px;width:150px;height:21px;background:#ffe1e1;border-left:1px solid #888;border-top:1px solid #999;box-sizing:border-box;"></div>
<div class="sm" style="left:1006px;top:105px">Function disabled</div>
<svg style="left:1156px;top:103px" width="16" height="16" viewBox="0 0 16 16"><rect x="1" y="3" width="13" height="11" fill="#0ee"/><path d="M4 4v10M7 5v8M10 4v10M12 6v7" stroke="#4af" stroke-dasharray="2 1.500"/></svg>
<div style="left:1174px;top:101px;width:150px;height:21px;background:#c8ffff;border-left:1px solid #888;border-top:1px solid #999;box-sizing:border-box;"></div>
<div class="sm" style="left:1178px;top:105px">Function disabled</div>
<div style="left:1324px;top:101px;width:150px;height:21px;background:#a0ffa0;border-left:1px solid #888;border-top:1px solid #999;box-sizing:border-box;"></div>
<div class="sm" style="left:1328px;top:105px">Function disabled</div>
<div style="left:1474px;top:101px;width:150px;height:21px;background:#ffff80;border-left:1px solid #888;border-top:1px solid #999;box-sizing:border-box;"></div>
<div class="sm" style="left:1478px;top:105px">Function disabled</div>
<div style="left:1624px;top:101px;width:149px;height:21px;background:#ffb0ff;border-left:1px solid #888;border-top:1px solid #999;box-sizing:border-box;"></div>
<div class="sm" style="left:1628px;top:105px">Function disabled</div>
<div style="left:1776px;top:100px;width:11px;height:24px;background:#edf2fb;"></div>
<svg style="left:1778px;top:115px" width="7" height="7" viewBox="0 0 7 7"><rect x="0" y="0" width="7" height="1.300" fill="#000"/><path d="M0 3h7l-3.500 3.500z" fill="#000"/></svg>
<div style="left:1795px;top:104px;width:2px;height:14px;background:repeating-linear-gradient(#777 0 2px,transparent 2px 4px);"></div>
<svg style="left:1802px;top:103px" width="16" height="16" viewBox="0 0 16 16"><rect x="0" y="2" width="13" height="12" fill="#fff"/><path d="M2 6.500h10M2 9.500h9M2 12.500h4" stroke="#ccc" stroke-width=".8"/><text x="1.500" y="9.500" font-family="Liberation Mono,monospace" font-weight="bold" font-size="9.500" textLength="11" lengthAdjust="spacingAndGlyphs" fill="#f00">TI</text><path d="M9 14.500h1v-1h1.500v-1h1.500v-1h2v3z" fill="#999"/></svg>
<svg style="left:1823px;top:103px" width="16" height="16" viewBox="0 0 16 16"><path d="M3 3v3l4 3 4 0 3 4" fill="none" stroke="#ddb0b8" stroke-width="1.500"/><circle cx="3.500" cy="3" r="1.500" fill="#b8b8e0"/><circle cx="8" cy="9" r="1.700" fill="#e8a0a8"/><path d="M11 12l3 3m0-3l-3 3" stroke="#ddb0b8"/></svg>
<svg style="left:1845px;top:103px" width="16" height="16" viewBox="0 0 16 16"><path d="M2 2l5 5" stroke="#006" stroke-width="1.800"/><circle cx="8" cy="7" r="2.300" fill="#a00"/><path d="M9 8l6 4M5 10l-3 4m2-5l-3 1m5 0v4M11 13l3 2m-4-3l-1 3" stroke="#000" stroke-width="1.100"/></svg>
<svg style="left:1867px;top:103px" width="16" height="16" viewBox="0 0 16 16"><rect x=".5" y=".5" width="14" height="11" rx="1" fill="#0b0" stroke="#000" stroke-width="1.300"/><path d="M2 3.500h11M2 6.500h4" stroke="#000"/><rect x="5.500" y="7.500" width="10" height="7" fill="#fff" stroke="#000"/><rect x="6" y="8" width="9" height="2" fill="#555"/><path d="M7 12.500h6" stroke="#000"/></svg>
<div style="left:1888px;top:100px;width:11px;height:24px;background:#edf2fb;"></div>
<svg style="left:1890px;top:115px" width="7" height="7" viewBox="0 0 7 7"><rect x="0" y="0" width="7" height="1.300" fill="#000"/><path d="M0 3h7l-3.500 3.500z" fill="#000"/></svg>
<div style="left:6px;top:130px;width:2px;height:14px;background:repeating-linear-gradient(#777 0 2px,transparent 2px 4px);"></div>
<svg style="left:13px;top:129px" width="16" height="16" viewBox="0 0 16 16"><path d="M3 12v-9l4 5 4-5v9" fill="none" stroke="#f0a8a8" stroke-width="1.800"/><path d="M1 7.500h5M1 10.500h5M1 13.500h6" stroke="#ccc"/><path d="M13 5v9m-2-2.500l2 2.500 2-2.500" stroke="#c0c8f0" fill="none" stroke-width="1.300"/></svg>
<svg style="left:35px;top:129px" width="16" height="16" viewBox="0 0 16 16"><path d="M4 12v-9l3.500 5 3.500-5v9" fill="none" stroke="#f0a8a8" stroke-width="1.800"/><rect x="2" y="8" width="4" height="5" fill="#c0c0e8"/><path d="M13 5v9m-2-2.500l2 2.500 2-2.500" stroke="#c0c8f0" fill="none" stroke-width="1.300"/></svg>
<svg style="left:57px;top:129px" width="16" height="16" viewBox="0 0 16 16"><path d="M5 .5h6l4.500 4.500v6l-4.500 4.500h-6l-4.500-4.500v-6z" fill="#f4b0b0"/><text x="1.500" y="10.800" font-family="Liberation Sans,sans-serif" font-weight="bold" font-size="6.300" fill="#fff" textLength="13" lengthAdjust="spacingAndGlyphs">STOP</text></svg>
<svg style="left:79px;top:129px" width="16" height="16" viewBox="0 0 16 16"><path d="M3 9v-7l3 4 3-4v5" fill="none" stroke="#f0a8a8" stroke-width="1.600"/><path d="M1 7.500h6M1 10.500h6M1 13.500h7" stroke="#ccc"/><path d="M12 4c-3 1-3 9 0 10m1-11v10" stroke="#c0c8f0" fill="none" stroke-width="1.300"/><path d="M13 2l2.500 3h-5z" fill="#c0c8f0"/></svg>
<div style="left:98px;top:128px;width:150px;height:20px;background:#c0c0c0;border:solid;border-width:2px 1px 1px 2px;border-color:#707070 #555 #222 #707070;box-sizing:border-box;"></div>
<div style="left:231px;top:130px;width:1px;height:17px;background:#e8e8e8;"></div>
<div style="left:232px;top:130px;width:15px;height:17px;background:#f0f0f0;"></div>
<svg style="left:236px;top:136px" width="7" height="4" viewBox="0 0 7 4"><path d="M0 0h7l-3.500 4z" fill="#000"/></svg>
<div style="left:251px;top:126px;width:11px;height:24px;background:#f1f5fb;"></div>
<svg style="left:253px;top:141px" width="7" height="7" viewBox="0 0 7 7"><rect x="0" y="0" width="7" height="1.300" fill="#000"/><path d="M0 3h7l-3.500 3.500z" fill="#000"/></svg>
<div style="left:1px;top:151px;width:1913px;height:1px;background:#333;"></div>
<div style="left:2px;top:152px;width:1912px;height:1px;background:#b8b8b8;"></div>
<div style="left:1px;top:151px;width:1px;height:833px;background:#222;"></div>
<div style="left:2px;top:152px;width:1px;height:832px;background:#8c8c8c;"></div>
<div style="left:5px;top:155px;width:272px;height:19px;background:#ffe1e1;"></div>
<div class="ui" style="left:6px;top:155px;letter-spacing:0.267px;">Core0 Symbols</div>
<div style="left:280px;top:158px;width:13px;height:13px;background:#fff;"></div>
<div style="left:299px;top:158px;width:13px;height:13px;background:#fff;"></div>
<div style="left:318px;top:158px;width:13px;height:13px;background:#fff;"></div>
<svg style="left:283px;top:163px" width="8" height="4" viewBox="0 0 8 4"><path d="M0 0h8l-4 4z" fill="#000"/></svg>
<svg style="left:299px;top:158px" width="13" height="13" viewBox="0 0 13 13"><path d="M4 2h5v6h-5z M5 3v4h2v-4z" fill="#000" fill-rule="evenodd"/><rect x="2" y="8" width="9" height="1.200" fill="#000"/><rect x="6" y="9" width="1.200" height="3.500" fill="#000"/></svg>
<svg style="left:320px;top:160px" width="10" height="10" viewBox="0 0 10 10"><path d="M.5 .5l9 9m0-9l-9 9" stroke="#000" stroke-width="1.400"/></svg>
<div style="left:5px;top:174px;width:328px;height:597px;background:#fff;border:1px solid;border-color:#828282 #e3e3e3 #e3e3e3 #828282;box-sizing:border-box;"></div>
<div style="left:6px;top:175px;width:326px;height:1px;background:#a0a0a0;"></div>
<div style="left:8px;top:177px;width:24px;height:17px;background:#ececec;"></div>
<svg style="left:9px;top:179px" width="14" height="13" viewBox="0 0 14 13"><path d="M.8 .8h12.400l-4.700 5v6l-3-1.500v-4.500z" fill="#fff" stroke="#00c" stroke-width="1.600" stroke-linejoin="round"/><path d="M1 1h12l-1 1.500h-10z" fill="#00c"/></svg>
<div class="ui" style="left:25px;top:178px;font-size:14px;color:#00c;font-weight:bold;">:</div>
<div class="ui" style="left:33px;top:177px;letter-spacing:0.123px;">*Os_User</div>
<div style="left:15px;top:210px;width:1px;height:50px;background:repeating-linear-gradient(#808080 0 1px,transparent 1px 2px);"></div>
<div style="left:11px;top:201px;width:9px;height:9px;background:#fff;border:1px solid #848484;box-sizing:border-box;"></div>
<svg style="left:13px;top:203px" width="5" height="5" viewBox="0 0 5 5"><path d="M0 2.500h5M2.500 0v5" stroke="#000"/></svg>
<div style="left:21px;top:205px;width:5px;height:1px;background:repeating-linear-gradient(90deg,#808080 0 1px,transparent 1px 2px);"></div>
<svg style="left:28px;top:198px" width="13" height="15" viewBox="0 0 13 15"><path d="M.5 .5h8l3 3v10h-11z" fill="#fff" stroke="#000"/><path d="M8.500 .5v3h3" fill="none" stroke="#000"/><path d="M.5 14h11.500v-10" stroke="#000" fill="none"/><path d="M2 3.500h5M2 5.500h5" stroke="#00f"/></svg>
<div class="ui" style="left:47px;top:197px;letter-spacing:0.573px;">Header files / Other</div>
<div style="left:11px;top:221px;width:9px;height:9px;background:#fff;border:1px solid #848484;box-sizing:border-box;"></div>
<svg style="left:13px;top:223px" width="5" height="5" viewBox="0 0 5 5"><path d="M0 2.500h5M2.500 0v5" stroke="#000"/></svg>
<div style="left:21px;top:225px;width:5px;height:1px;background:repeating-linear-gradient(90deg,#808080 0 1px,transparent 1px 2px);"></div>
<svg style="left:28px;top:218px" width="13" height="15" viewBox="0 0 13 15"><path d="M.5 .5h8l3 3v10h-11z" fill="#fff" stroke="#000"/><path d="M8.500 .5v3h3" fill="none" stroke="#000"/><path d="M.5 14h11.500v-10" stroke="#000" fill="none"/><path d="M2 4.500h7M2 6.500h7M2 8.500h7M2 10.500h7M2 12.500h7M2 2.500h5" stroke="#00f"/></svg>
<div class="ui" style="left:47px;top:217px;letter-spacing:0.317px;">Source files</div>
<div style="left:11px;top:241px;width:9px;height:9px;background:#fff;border:1px solid #848484;box-sizing:border-box;"></div>
<svg style="left:13px;top:243px" width="5" height="5" viewBox="0 0 5 5"><path d="M0 2.500h5M2.500 0v5" stroke="#000"/></svg>
<div style="left:21px;top:245px;width:5px;height:1px;background:repeating-linear-gradient(90deg,#808080 0 1px,transparent 1px 2px);"></div>
<svg style="left:28px;top:238px" width="13" height="15" viewBox="0 0 13 15"><path d="M.5 .5h8l3 3v10h-11z" fill="#fff" stroke="#000"/><path d="M8.500 .5v3h3" fill="none" stroke="#000"/><path d="M.5 14h11.500v-10" stroke="#000" fill="none"/><path d="M2 7.500h7M2 9.500h4" stroke="#00f"/></svg>
<div class="ui" style="left:47px;top:237px;letter-spacing:0.164px;">Functions</div>
<div style="left:11px;top:261px;width:9px;height:9px;background:#fff;border:1px solid #848484;box-sizing:border-box;"></div>
<svg style="left:13px;top:263px" width="5" height="5" viewBox="0 0 5 5"><path d="M0 2.500h5M2.500 0v5" stroke="#000"/></svg>
<div style="left:21px;top:265px;width:5px;height:1px;background:repeating-linear-gradient(90deg,#808080 0 1px,transparent 1px 2px);"></div>
<svg style="left:28px;top:258px" width="13" height="15" viewBox="0 0 13 15"><path d="M.5 .5h8l3 3v10h-11z" fill="#fff" stroke="#000"/><path d="M8.500 .5v3h3" fill="none" stroke="#000"/><path d="M.5 14h11.500v-10" stroke="#000" fill="none"/><path d="M2.500 3v10M5.500 3v10" stroke="#00f" stroke-dasharray="1 1"/></svg>
<div class="ui" style="left:47px;top:257px;letter-spacing:0.184px;">Sections</div>
<div style="left:4px;top:776px;width:43px;height:20px;background:#f0f0f0;border:1px solid #c4c4c4;box-sizing:border-box;"></div>
<div class="ui" style="left:11px;top:778px;">Tar...</div>
<div style="left:46px;top:775px;width:44px;height:22px;background:#fff;border:1px solid #d8d8d8;border-top:none;box-sizing:border-box;"></div>
<div class="ui" style="left:53px;top:778px;">Cor...</div>
<div style="left:90px;top:776px;width:43px;height:20px;background:#f0f0f0;border:1px solid #c4c4c4;box-sizing:border-box;"></div>
<div class="ui" style="left:97px;top:778px;">Cor...</div>
<div style="left:133px;top:776px;width:43px;height:20px;background:#f0f0f0;border:1px solid #c4c4c4;box-sizing:border-box;"></div>
<div class="ui" style="left:140px;top:778px;">Cor...</div>
<div style="left:177px;top:776px;width:43px;height:20px;background:#f0f0f0;border:1px solid #c4c4c4;box-sizing:border-box;"></div>
<div class="ui" style="left:184px;top:778px;">Cor...</div>
<div style="left:221px;top:776px;width:43px;height:20px;background:#f0f0f0;border:1px solid #c4c4c4;box-sizing:border-box;"></div>
<div class="ui" style="left:228px;top:778px;">Cor...</div>
<div style="left:265px;top:776px;width:43px;height:20px;background:#f0f0f0;border:1px solid #c4c4c4;box-sizing:border-box;"></div>
<div class="ui" style="left:272px;top:778px;">Cor...</div>
<div style="left:335px;top:152px;width:2px;height:624px;background:#c4c4c4;"></div>
<div style="left:3px;top:774px;width:334px;height:1px;background:#e0e0e0;"></div>
<div style="left:3px;top:775px;width:334px;height:1px;background:#cccccc;"></div>
<div style="left:343px;top:152px;width:1px;height:646px;background:#c4c4c4;"></div>
<div style="left:343px;top:797px;width:1571px;height:1px;background:#c4c4c4;"></div>
<div style="left:344px;top:153px;width:134px;height:24px;background:#fff;"></div>
<div style="left:346px;top:154px;width:111px;height:19px;background:#ffe1e1;"></div>
<div class="ui" style="left:347px;top:154px;letter-spacing:0.014px;">D:\...\\Ifx_Ssw_Tc0.c</div>
<svg style="left:462px;top:158px" width="10" height="10" viewBox="0 0 10 10"><path d="M.7 .7l8.600 8.600m0-8.600l-8.600 8.600" stroke="#000" stroke-width="1.500"/></svg>
<div style="left:478px;top:154px;width:192px;height:21px;background:#f0f0f0;border:1px solid #a8a8a8;border-bottom:none;box-sizing:border-box;"></div>
<div style="left:480px;top:155px;width:168px;height:19px;background:#fde8e6;"></div>
<div class="ui" style="left:482px;top:155px;letter-spacing:0.325px;color:#5a5a5a;">D:\...\TC4Dx\src\Mcu_Timer.c</div>
<div style="left:669px;top:154px;width:187px;height:21px;background:#f0f0f0;border:1px solid #a8a8a8;border-bottom:none;box-sizing:border-box;"></div>
<div style="left:671px;top:155px;width:162px;height:19px;background:#fde8e6;"></div>
<div class="ui" style="left:673px;top:155px;letter-spacing:0.246px;color:#5a5a5a;">D:\...\TC4Dx\src\Mcu_Core.c</div>
<div style="left:855px;top:154px;width:168px;height:21px;background:#f0f0f0;border:1px solid #a8a8a8;border-bottom:none;box-sizing:border-box;"></div>
<div style="left:857px;top:155px;width:144px;height:19px;background:#fde8e6;"></div>
<div class="ui" style="left:859px;top:155px;letter-spacing:0.268px;color:#5a5a5a;">D:\...\config\Os_UserInf.c</div>
<div style="left:1022px;top:154px;width:201px;height:21px;background:#f0f0f0;border:1px solid #a8a8a8;border-bottom:none;box-sizing:border-box;"></div>
<div style="left:1024px;top:155px;width:175px;height:19px;background:#fde8e6;"></div>
<div class="ui" style="left:1026px;top:155px;letter-spacing:0.342px;color:#5a5a5a;">D:\...\Kernel\src\Os_Interrupt.c</div>
<div style="left:478px;top:175px;width:1436px;height:1px;background:#a0a0a0;"></div>
<div style="left:344px;top:177px;width:1570px;height:1px;background:#d8d8d8;"></div>
<div style="left:1849px;top:156px;width:1px;height:15px;background:#000;"></div>
<div class="ui" style="left:1856px;top:156px;letter-spacing:0.049px;">Ln 495</div>
<div style="left:1896px;top:156px;width:1px;height:15px;background:#000;"></div>
<div style="left:1903px;top:157px;width:11px;height:13px;background:#fff;"></div>
<svg style="left:1905px;top:159px" width="10" height="8" viewBox="0 0 10 8"><path d="M0 1h10" stroke="#000" stroke-width="1.600"/><path d="M0 3.500h10l-5 4.500z" fill="#000"/></svg>
<div style="left:346px;top:178px;width:1568px;height:615px;background:#f0f0f0;border-left:2px solid #6a6a6a;border-top:2px solid #6a6a6a;box-sizing:border-box;"></div>
<div style="left:344px;top:793px;width:1570px;height:1px;background:#fff;"></div>
<div style="left:344px;top:794px;width:1570px;height:3px;background:#f8f8f8;"></div>
<div style="left:348px;top:180px;width:1550px;height:597px;background:#fff;"></div>
<div style="left:348px;top:180px;width:17px;height:597px;background:repeating-conic-gradient(#c8c8c8 0 25%,#fff 0 50%) 0 0/2px 2px;"></div>
<div style="left:1905px;top:699px;width:2px;height:46px;background:#8a8a8a;"></div>
<div style="left:365px;top:784px;width:17px;height:2px;background:#8a8a8a;"></div>
<div style="left:365px;top:700px;width:1533px;height:13px;background:#ffff00;"></div>
<div class="mono" style="left:366px;top:181px;width:1531px;height:596px;overflow:hidden">    <span class="c">/* Initialize the CSA and stack pointer */</span>
    Ifx_Ssw_jumpToFunctionWithLink(__CStartBasic);
    Ifx_Ssw_Barrier();

    <span class="c">/* MBIST Tests for remaining */</span>
    Ifx_Ssw_Keyoff_Mbist();

    <span class="c">/* Key-off assigned tests (LFM) and store result */</span>
    Ifx_Ssw_Keyoff_SafetyLibraryTests();

    <span class="c">/* Clear Key-off Marker, normally the code shall not reach here */</span>
    Ifx_Ssw_clearKeyoffMarker();

    <span class="c">/* Go into infinite loop */</span>
    Ifx_Ssw_infiniteLoop();
}


<span class="c">/<span class="st">*******************************************************************************</span></span>
<span class="c"> <span class="st">*</span>                        reset vector address, user section to inform linker to locate the code at 0x8000 0020</span>
<span class="c"> <span class="st">******************************************************************************</span>/</span>
<span class="k">#if</span> defined(__TASKING__)
<span class="k">#pragma</span> protect on
<span class="k">#pragma</span> section code "<span class="s">start</span>"
<span class="k">#elif</span> defined(__HIGHTEC__) &amp;&amp; !defined(__clang__)
<span class="k">#pragma</span> section
<span class="k">#pragma</span> section "<span class="s">.start</span>" x
<span class="k">#elif</span> defined(__HIGHTEC__) &amp;&amp; defined(__clang__)
<span class="k">#pragma</span> clang section text="<span class="s">.start</span>"
<span class="k">#elif</span> defined(__GNUC__) &amp;&amp; !defined(__HIGHTEC__)
<span class="k">#pragma</span> section
<span class="k">#pragma</span> section "<span class="s">.start</span>" x
<span class="k">#elif</span> defined(__DCC__)
<span class="k">#pragma</span> section CODE "<span class="s">.start</span>" X
<span class="k">#elif</span> defined(__ghs__)
<span class="k">#pragma</span> ghs section text="<span class="s">.start</span>"
<span class="k">#endif</span>

IFX_SSW_USED <span class="k">void</span> _START(<span class="k">void</span>)
{
    Ifx_Ssw_Start(IFX_CFG_SSW_CSA_USTACK_PTR, __StartUpSoftware);
}


<span class="c">/* reset the sections defined above, to normal region */</span>
<span class="k">#if</span> defined(__TASKING__)</div>
<div style="left:352px;top:198px;width:5px;height:5px;background:#000080;border-radius:50%;"></div>
<div style="left:352px;top:250px;width:5px;height:5px;background:#000080;border-radius:50%;"></div>
<div style="left:352px;top:289px;width:5px;height:5px;background:#000080;border-radius:50%;"></div>
<div style="left:352px;top:380px;width:5px;height:5px;background:#000080;border-radius:50%;"></div>
<div style="left:352px;top:718px;width:5px;height:5px;background:#000080;border-radius:50%;"></div>
<svg style="left:350px;top:701px" width="11" height="11" viewBox="0 0 11 11"><path d="M.7 3.500h4.800v-2.800l4.800 4.800-4.800 4.800v-2.800h-4.800z" fill="#ff0" stroke="#000" stroke-width="1.200"/></svg>
<div style="left:3px;top:804px;width:1006px;height:1px;background:#c4c4c4;"></div>
<div style="left:1015px;top:804px;width:899px;height:1px;background:#c4c4c4;"></div>
<div style="left:5px;top:807px;width:943px;height:19px;background:#c0c0c0;"></div>
<div class="ui" style="left:6px;top:807px;letter-spacing:0.288px;">Messages</div>
<div style="left:951px;top:810px;width:13px;height:13px;background:#fff;"></div>
<div style="left:970px;top:810px;width:13px;height:13px;background:#fff;"></div>
<div style="left:989px;top:810px;width:13px;height:13px;background:#fff;"></div>
<svg style="left:954px;top:815px" width="8" height="4" viewBox="0 0 8 4"><path d="M0 0h8l-4 4z" fill="#000"/></svg>
<svg style="left:970px;top:810px" width="13" height="13" viewBox="0 0 13 13"><path d="M4 2h5v6h-5z M5 3v4h2v-4z" fill="#000" fill-rule="evenodd"/><rect x="2" y="8" width="9" height="1.200" fill="#000"/><rect x="6" y="9" width="1.200" height="3.500" fill="#000"/></svg>
<svg style="left:991px;top:812px" width="10" height="10" viewBox="0 0 10 10"><path d="M.5 .5l9 9m0-9l-9 9" stroke="#000" stroke-width="1.400"/></svg>
<div style="left:1003px;top:827px;width:1px;height:157px;background:#dcdcdc;"></div>
<div style="left:1008px;top:804px;width:1px;height:180px;background:#c0c0c0;"></div>
<div style="left:6px;top:827px;width:981px;height:153px;background:#fff;border-left:1px solid #828282;border-top:1px solid #828282;box-sizing:border-box;"></div>
<div style="left:7px;top:828px;width:50px;height:17px;background:#f0f0f0;border:1px solid;border-color:#fff #696969 #696969 #fff;box-shadow:inset -1px -1px 0 #a0a0a0;box-sizing:border-box;"></div>
<div class="mono" style="left:14px;top:831px;">I...</div>
<div style="left:57px;top:828px;width:100px;height:17px;background:#f0f0f0;border:1px solid;border-color:#fff #696969 #696969 #fff;box-shadow:inset -1px -1px 0 #a0a0a0;box-sizing:border-box;"></div>
<div class="mono" style="left:64px;top:831px;">Type</div>
<div style="left:57px;top:845px;width:1px;height:135px;background:#f0f0f0;"></div>
<div style="left:157px;top:828px;width:100px;height:17px;background:#f0f0f0;border:1px solid;border-color:#fff #696969 #696969 #fff;box-shadow:inset -1px -1px 0 #a0a0a0;box-sizing:border-box;"></div>
<div class="mono" style="left:164px;top:831px;">Time</div>
<div style="left:157px;top:845px;width:1px;height:135px;background:#f0f0f0;"></div>
<div style="left:257px;top:828px;width:100px;height:17px;background:#f0f0f0;border:1px solid;border-color:#fff #696969 #696969 #fff;box-shadow:inset -1px -1px 0 #a0a0a0;box-sizing:border-box;"></div>
<div class="mono" style="left:264px;top:831px;">Target</div>
<div style="left:257px;top:845px;width:1px;height:135px;background:#f0f0f0;"></div>
<div style="left:357px;top:828px;width:150px;height:17px;background:#f0f0f0;border:1px solid;border-color:#fff #696969 #696969 #fff;box-shadow:inset -1px -1px 0 #a0a0a0;box-sizing:border-box;"></div>
<div class="mono" style="left:364px;top:831px;">Source</div>
<div style="left:357px;top:845px;width:1px;height:135px;background:#f0f0f0;"></div>
<div style="left:507px;top:828px;width:480px;height:17px;background:#f0f0f0;border:1px solid;border-color:#fff #696969 #696969 #fff;box-shadow:inset 0 -1px 0 #a0a0a0;box-sizing:border-box;border-right:none;"></div>
<div class="mono" style="left:514px;top:831px;">Message</div>
<div style="left:507px;top:845px;width:1px;height:135px;background:#f0f0f0;"></div>
<div style="left:7px;top:863px;width:980px;height:1px;background:#f0f0f0;"></div>
<div style="left:7px;top:880px;width:980px;height:1px;background:#f0f0f0;"></div>
<div style="left:7px;top:897px;width:980px;height:1px;background:#f0f0f0;"></div>
<div style="left:7px;top:914px;width:980px;height:1px;background:#f0f0f0;"></div>
<div style="left:7px;top:931px;width:980px;height:1px;background:#f0f0f0;"></div>
<div style="left:7px;top:948px;width:980px;height:1px;background:#f0f0f0;"></div>
<div style="left:7px;top:965px;width:980px;height:1px;background:#f0f0f0;"></div>
<div style="left:987px;top:828px;width:16px;height:152px;background:#f0f0f0;"></div>
<div style="left:987px;top:827px;width:17px;height:1px;background:#828282;"></div>
<div style="left:994px;top:946px;width:2px;height:18px;background:#8a8a8a;"></div>
<svg style="left:10px;top:849px" width="14" height="13" viewBox="0 0 14 13"><path d="M.8 7.500l2.200-2.200 2.500 2.700 6.500-7.500 1.500 1.200-7.500 10.800z" fill="#0e0" stroke="#060" stroke-width=".7"/></svg>
<div class="mono" style="left:28px;top:850px;color:#008000;">118</div>
<div class="mono" style="left:64px;top:850px;color:#008000;">Success</div>
<div class="mono" style="left:164px;top:850px;color:#008000;">10:21:27...</div>
<div class="mono" style="left:264px;top:850px;color:#008000;">Core5</div>
<div class="mono" style="left:364px;top:850px;color:#008000;">UDEDebugServer</div>
<div class="mono" style="left:514px;top:850px;color:#008000;">Program with ID 0x1 - code size 291254 bytes - was loaded!</div>
<svg style="left:10px;top:866px" width="14" height="13" viewBox="0 0 14 13"><path d="M.8 7.500l2.200-2.200 2.500 2.700 6.500-7.500 1.500 1.200-7.500 10.800z" fill="#0e0" stroke="#060" stroke-width=".7"/></svg>
<div class="mono" style="left:28px;top:867px;color:#008000;">119</div>
<div class="mono" style="left:64px;top:867px;color:#008000;">Success</div>
<div class="mono" style="left:164px;top:867px;color:#008000;">10:21:27...</div>
<div class="mono" style="left:264px;top:867px;color:#008000;">Core2</div>
<div class="mono" style="left:364px;top:867px;color:#008000;">UDEDebugServer</div>
<div class="mono" style="left:514px;top:867px;color:#008000;">Program with ID 0x1 - code size 291254 bytes - was loaded!</div>
<svg style="left:10px;top:883px" width="14" height="13" viewBox="0 0 14 13"><path d="M.8 7.500l2.200-2.200 2.500 2.700 6.500-7.500 1.500 1.200-7.500 10.800z" fill="#0e0" stroke="#060" stroke-width=".7"/></svg>
<div class="mono" style="left:28px;top:884px;color:#008000;">120</div>
<div class="mono" style="left:64px;top:884px;color:#008000;">Success</div>
<div class="mono" style="left:164px;top:884px;color:#008000;">10:21:27...</div>
<div class="mono" style="left:264px;top:884px;color:#008000;">Core3</div>
<div class="mono" style="left:364px;top:884px;color:#008000;">UDEDebugServer</div>
<div class="mono" style="left:514px;top:884px;color:#008000;">Program with ID 0x1 - code size 291254 bytes - was loaded!</div>
<svg style="left:10px;top:900px" width="14" height="13" viewBox="0 0 14 13"><path d="M.8 7.500l2.200-2.200 2.500 2.700 6.500-7.500 1.500 1.200-7.500 10.800z" fill="#0e0" stroke="#060" stroke-width=".7"/></svg>
<div class="mono" style="left:28px;top:901px;color:#008000;">121</div>
<div class="mono" style="left:64px;top:901px;color:#008000;">Success</div>
<div class="mono" style="left:164px;top:901px;color:#008000;">10:21:27...</div>
<div class="mono" style="left:264px;top:901px;color:#008000;">Core4</div>
<div class="mono" style="left:364px;top:901px;color:#008000;">UDEDebugServer</div>
<div class="mono" style="left:514px;top:901px;color:#008000;">Program with ID 0x1 - code size 291254 bytes - was loaded!</div>
<svg style="left:10px;top:917px" width="14" height="13" viewBox="0 0 14 13"><path d="M.8 7.500l2.200-2.200 2.500 2.700 6.500-7.500 1.500 1.200-7.500 10.800z" fill="#0e0" stroke="#060" stroke-width=".7"/></svg>
<div class="mono" style="left:28px;top:918px;color:#008000;">122</div>
<div class="mono" style="left:64px;top:918px;color:#008000;">Success</div>
<div class="mono" style="left:164px;top:918px;color:#008000;">10:21:27...</div>
<div class="mono" style="left:264px;top:918px;color:#008000;">Core0</div>
<div class="mono" style="left:364px;top:918px;color:#008000;">UDEDebugServer</div>
<div class="mono" style="left:514px;top:918px;color:#008000;">Program with ID 0x1 - code size 291254 bytes - was loaded!</div>
<svg style="left:9px;top:933px" width="16" height="16" viewBox="0 0 16 16"><ellipse cx="8" cy="6.500" rx="7" ry="6" fill="#fff" stroke="#000" stroke-width="1.200"/><path d="M6 12l3 3.500v-3.500z" fill="#fff" stroke="#000" stroke-width="1"/><path d="M6.500 11.500h3" stroke="#fff" stroke-width="1.500"/><path d="M3 11c3 2 8 2 11-1" fill="none" stroke="#999" stroke-width=".8"/><text x="5.800" y="10" font-family="Liberation Serif,serif" font-weight="bold" font-size="10.500" fill="#00f">i</text></svg>
<div class="mono" style="left:28px;top:935px;color:#000;">123</div>
<div class="mono" style="left:64px;top:935px;color:#000;">Info</div>
<div class="mono" style="left:164px;top:935px;color:#000;">10:21:29...</div>
<div class="mono" style="left:264px;top:935px;color:#000;">Core0</div>
<div class="mono" style="left:364px;top:935px;color:#000;">PFLASH</div>
<div class="mono" style="left:514px;top:935px;color:#000;">Programming with special feature handling ...</div>
<svg style="left:10px;top:951px" width="14" height="13" viewBox="0 0 14 13"><path d="M.8 7.500l2.200-2.200 2.500 2.700 6.500-7.500 1.500 1.200-7.500 10.800z" fill="#0e0" stroke="#060" stroke-width=".7"/></svg>
<div class="mono" style="left:28px;top:952px;color:#008000;">124</div>
<div class="mono" style="left:64px;top:952px;color:#008000;">Success</div>
<div class="mono" style="left:164px;top:952px;color:#008000;">10:21:31...</div>
<div class="mono" style="left:264px;top:952px;color:#008000;">Core0</div>
<div class="mono" style="left:364px;top:952px;color:#008000;">PFLASH</div>
<div class="mono" style="left:514px;top:952px;color:#008000;">Flashing program sections succeeded (2094 ms).</div>
<div style="left:1015px;top:804px;width:1px;height:180px;background:#b0b0b0;"></div>
<div style="left:1017px;top:807px;width:842px;height:19px;background:#c0c0c0;"></div>
<div class="ui" style="left:1018px;top:807px;letter-spacing:0.373px;">Progress</div>
<div style="left:1862px;top:810px;width:13px;height:13px;background:#fff;"></div>
<div style="left:1881px;top:810px;width:13px;height:13px;background:#fff;"></div>
<div style="left:1900px;top:810px;width:13px;height:13px;background:#fff;"></div>
<svg style="left:1865px;top:815px" width="8" height="4" viewBox="0 0 8 4"><path d="M0 0h8l-4 4z" fill="#000"/></svg>
<svg style="left:1881px;top:810px" width="13" height="13" viewBox="0 0 13 13"><path d="M4 2h5v6h-5z M5 3v4h2v-4z" fill="#000" fill-rule="evenodd"/><rect x="2" y="8" width="9" height="1.200" fill="#000"/><rect x="6" y="9" width="1.200" height="3.500" fill="#000"/></svg>
<svg style="left:1902px;top:812px" width="10" height="10" viewBox="0 0 10 10"><path d="M.5 .5l9 9m0-9l-9 9" stroke="#000" stroke-width="1.400"/></svg>
<div style="left:1019px;top:827px;width:895px;height:157px;background:#fff;border-left:1px solid #828282;border-top:1px solid #828282;box-sizing:border-box;"></div>
<div style="left:1020px;top:828px;width:239px;height:17px;background:#f0f0f0;border:1px solid;border-color:#fff #696969 #696969 #fff;box-shadow:inset -1px -1px 0 #a0a0a0;box-sizing:border-box;"></div>
<div class="mono" style="left:1027px;top:831px;">Task</div>
<div style="left:1259px;top:828px;width:160px;height:17px;background:#f0f0f0;border:1px solid;border-color:#fff #696969 #696969 #fff;box-shadow:inset -1px -1px 0 #a0a0a0;box-sizing:border-box;"></div>
<div class="mono" style="left:1266px;top:831px;">Progress</div>
<div style="left:1259px;top:845px;width:1px;height:139px;background:#f0f0f0;"></div>
<div style="left:1419px;top:828px;width:200px;height:17px;background:#f0f0f0;border:1px solid;border-color:#fff #696969 #696969 #fff;box-shadow:inset -1px -1px 0 #a0a0a0;box-sizing:border-box;"></div>
<div class="mono" style="left:1426px;top:831px;">State</div>
<div style="left:1419px;top:845px;width:1px;height:139px;background:#f0f0f0;"></div>
<div style="left:1619px;top:828px;width:80px;height:17px;background:#f0f0f0;border:1px solid;border-color:#fff #696969 #696969 #fff;box-shadow:inset -1px -1px 0 #a0a0a0;box-sizing:border-box;"></div>
<div class="mono" style="left:1626px;top:831px;">Cancel</div>
<div style="left:1619px;top:845px;width:1px;height:139px;background:#f0f0f0;"></div>
<div style="left:1699px;top:828px;width:160px;height:17px;background:#f0f0f0;border:1px solid;border-color:#fff #696969 #696969 #fff;box-shadow:inset -1px -1px 0 #a0a0a0;box-sizing:border-box;"></div>
<div class="mono" style="left:1706px;top:831px;">Owner</div>
<div style="left:1699px;top:845px;width:1px;height:139px;background:#f0f0f0;"></div>
<div style="left:1859px;top:828px;width:80px;height:17px;background:#f0f0f0;border:1px solid;border-color:#fff #696969 #696969 #fff;box-shadow:inset 0 -1px 0 #a0a0a0;box-sizing:border-box;border-right:none;"></div>
<div class="mono" style="left:1866px;top:831px;">Current</div>
<div style="left:1859px;top:845px;width:1px;height:139px;background:#f0f0f0;"></div>
<div style="left:1020px;top:864px;width:894px;height:1px;background:#f0f0f0;"></div>
<div style="left:1020px;top:882px;width:894px;height:1px;background:#f0f0f0;"></div>
<div style="left:1020px;top:900px;width:894px;height:1px;background:#f0f0f0;"></div>
<div style="left:1020px;top:918px;width:894px;height:1px;background:#f0f0f0;"></div>
<div style="left:1020px;top:936px;width:894px;height:1px;background:#f0f0f0;"></div>
<div style="left:1020px;top:954px;width:894px;height:1px;background:#f0f0f0;"></div>
<div style="left:1020px;top:972px;width:894px;height:1px;background:#f0f0f0;"></div>
<div style="left:628px;top:394px;width:665px;height:238px;background:#f0f0f0;border-radius:8px;box-shadow:0 0 0 1px rgba(0,0,0,.28),0 18px 45px 5px rgba(0,0,0,.30),0 4px 14px rgba(0,0,0,.18);overflow:hidden;"><div style="left:0;top:0;width:100%;height:31px;background:#eef2f9"></div></div>
<svg style="left:636px;top:401px" width="15" height="13" viewBox="0 0 15 13"><rect x=".5" y=".5" width="14" height="12" fill="#f4f4f4" stroke="#aaa"/><rect x="2" y="2" width="7" height="9" fill="#2a8a6a"/><rect x="2" y="2" width="3" height="9" fill="#3a6aa8"/><rect x="10" y="2" width="3" height="6" fill="#e4e4e4"/></svg>
<div class="ui" style="left:657px;top:401px;letter-spacing:0.196px;">Multicore / multi program loader</div>
<svg style="left:1272px;top:403px" width="11" height="11" viewBox="0 0 11 11"><path d="M.5 .5l10 10m0-10l-10 10" stroke="#000" stroke-width="1.200"/></svg>
<div style="left:636px;top:437px;width:13px;height:13px;background:#fff;border:1px solid;border-color:#696969 #e3e3e3 #e3e3e3 #696969;box-shadow:inset 1px 1px 0 #a0a0a0;box-sizing:border-box;"></div>
<div class="ui" style="left:654px;top:435px;letter-spacing:-0.182px;font-size:11px;line-height:14px;">Additional download</div>
<svg style="left:1115px;top:434px" width="16" height="16" viewBox="0 0 16 16"><rect x="3.500" y="5.500" width="11" height="9" fill="#f8f8f8" stroke="#000" stroke-dasharray="1 1" stroke-dashoffset=".5"/><path d="M4.500 2.500v6M1.500 5.500h6M2.500 3.500l4 4M6.500 3.500l-4 4" stroke="#e6e600" stroke-width="1.100"/></svg>
<svg style="left:1139px;top:437px" width="14" height="13" viewBox="0 0 14 13"><path d="M1 1l11 11M12 1l-11 11" stroke="#800" stroke-width="1.800"/></svg>
<svg style="left:1162px;top:437px" width="13" height="13" viewBox="0 0 13 13"><path d="M6.500 0l6 6h-4v2.500h-4v-2.500h-4z M5.500 8v5h2.500v-5z" fill="#000"/></svg>
<svg style="left:1185px;top:437px" width="13" height="13" viewBox="0 0 13 13"><path d="M6.500 13l6-6h-4v-2.500h-4v2.500h-4z M5.500 5v-5h2.500v5z" fill="#000"/></svg>
<div style="left:1210px;top:432px;width:75px;height:23px;background:#f0f0f0;border:1px solid;border-color:#9a9a9a #555 #555 #9a9a9a;box-sizing:border-box;"></div>
<div style="left:1211px;top:433px;width:73px;height:21px;border:1px solid;border-color:#fff #696969 #696969 #fff;box-shadow:inset -1px -1px 0 #a0a0a0;box-sizing:border-box;"></div>
<div class="ui" style="left:1240px;top:436px;font-size:11px;line-height:14px;">OK</div>
<div style="left:1210px;top:463px;width:75px;height:23px;background:#f0f0f0;border:1px solid;border-color:#fff #696969 #696969 #fff;box-shadow:inset -1px -1px 0 #a0a0a0;box-sizing:border-box;"></div>
<div class="ui" style="left:1230px;top:467px;font-size:11px;line-height:14px;">Cancel</div>
<div style="left:1210px;top:494px;width:75px;height:23px;background:#f0f0f0;border:1px solid;border-color:#fff #696969 #696969 #fff;box-shadow:inset -1px -1px 0 #a0a0a0;box-sizing:border-box;"></div>
<div class="ui" style="left:1236px;top:498px;font-size:11px;line-height:14px;">Help</div>
<div style="left:636px;top:463px;width:565px;height:160px;background:#fff;border:1px solid;border-color:#828282 #fff #fff #828282;box-shadow:inset 1px 1px 0 #696969;box-sizing:border-box;"></div>
<div style="left:638px;top:465px;width:562px;height:17px;background:#f0f0f0;border-bottom:1px solid #696969;box-shadow:inset 0 -1px 0 #a0a0a0;box-sizing:border-box;"></div>
<div class="ui" style="left:644px;top:466px;letter-spacing:0.023px;font-size:11px;line-height:14px;">Load File To</div>
<div style="left:638px;top:483px;width:562px;height:17px;background:#f0f0f0;"></div>
<div style="left:638px;top:483px;width:35px;height:16px;background:#fff;"></div>
<div style="left:643px;top:486px;width:11px;height:11px;background:#fff;border:1px solid #333;box-shadow:inset 1px 1px 0 #999;box-sizing:border-box;"></div>
<svg style="left:645px;top:488px" width="8" height="8" viewBox="0 0 8 8"><path d="M.5 3l2.300 2.500 4.500-5" fill="none" stroke="#000" stroke-width="1.800"/></svg>
<div class="ui" style="left:675px;top:485px;letter-spacing:0.002px;font-size:11px;line-height:14px;">TC4D9_SmartCodev103r1_ASR2011.elf {D:\Puhua\TC4XX\Tc4xx_Local_Project\02_TaskingProject\Debug\</div>
<div style="left:638px;top:500px;width:562px;height:1px;background:#ececec;"></div>
<div style="left:638px;top:517px;width:562px;height:1px;background:#ececec;"></div>
<div style="left:638px;top:534px;width:562px;height:1px;background:#ececec;"></div>
<div style="left:638px;top:551px;width:562px;height:1px;background:#ececec;"></div>
<div style="left:638px;top:568px;width:562px;height:1px;background:#ececec;"></div>
<div style="left:638px;top:585px;width:562px;height:1px;background:#ececec;"></div>
<div style="left:638px;top:602px;width:562px;height:1px;background:#ececec;"></div>
<div style="left:638px;top:604px;width:562px;height:18px;background:#f0f0f0;"></div>
<div style="left:655px;top:613px;width:191px;height:2px;background:#8a8a8a;"></div>
<div style="left:1212px;top:551px;width:12px;height:11px;background:#fff;border:2px solid #00f;box-sizing:border-box;"></div>
<div class="ui" style="left:1229px;top:549px;letter-spacing:-0.208px;font-size:11px;line-height:14px;">= Binary</div>
<div style="left:1212px;top:566px;width:12px;height:11px;background:#fff;border:2px solid #0d0;box-sizing:border-box;"></div>
<div class="ui" style="left:1229px;top:565px;letter-spacing:-0.407px;font-size:11px;line-height:14px;">= Symbols</div>
<svg style="left:1281px;top:620px" width="12" height="12" viewBox="0 0 12 12"><path d="M11.500 1l-10.500 10.500M11.500 5l-6.500 6.500" stroke="#888" stroke-width="1.200"/><path d="M11.500 2.500l-9 9M11.500 6.500l-5 5" stroke="#fff" stroke-width="1"/></svg>
<svg style="left:116px;top:44px" width="39" height="31.7"><rect x="1.25" y="1.25" width="36.5" height="29.2" fill="none" stroke="#f5363c" stroke-width="2.5"/></svg>
<svg style="left:1818px;top:98px" width="24" height="27"><rect x="1.5" y="1.5" width="21" height="24" fill="none" stroke="#f5363c" stroke-width="3"/></svg>
<svg style="left:1107px;top:427px" width="30" height="30"><rect x="1.5" y="1.5" width="27" height="27" fill="none" stroke="#f5363c" stroke-width="3"/></svg>
<svg style="left:619.3px;top:468px" width="590.7" height="42.7"><rect x="1.5" y="1.5" width="587.7" height="39.7" fill="none" stroke="#f5363c" stroke-width="3"/></svg>
<div style="left:165.5px;top:49px;width:20px;height:20px;background:#f5333a;border-radius:50%;"></div>
<div class="ui" style="left:171.8848828125px;top:51px;font-size:13px;color:#fff;">2</div>
<div style="left:195px;top:42px;width:186px;height:34px;background:rgba(78,78,78,.9);border-radius:4px;"></div>
<svg style="left:189px;top:53px" width="7" height="12" viewBox="0 0 7 12"><path d="M7 0v12l-6-6z" fill="rgba(78,78,78,.9)"/></svg>
<div class="ui" style="left:201px;top:48px;letter-spacing:-0.153px;font-size:18px;line-height:22px;color:#fff;">Click to programming</div>
<svg style="left:236px;top:63px" width="7" height="7" viewBox="0 0 7 7"><rect x="0" y="0" width="7" height="1.300" fill="#000"/><path d="M0 3h7l-3.500 3.500z" fill="#000"/></svg>
<div style="left:1673px;top:63px;width:20px;height:20px;background:#f5333a;border-radius:50%;"></div>
<div class="ui" style="left:1679.3848828125px;top:65px;font-size:13px;color:#fff;">1</div>
<div style="left:1702px;top:56px;width:143px;height:34px;background:rgba(78,78,78,.9);border-radius:4px;"></div>
<svg style="left:1696px;top:67px" width="7" height="12" viewBox="0 0 7 12"><path d="M7 0v12l-6-6z" fill="rgba(78,78,78,.9)"/></svg>
<div class="ui" style="left:1708px;top:62px;letter-spacing:-0.590px;font-size:18px;line-height:22px;color:#fff;">Click to link ECU</div>
</body></html>
